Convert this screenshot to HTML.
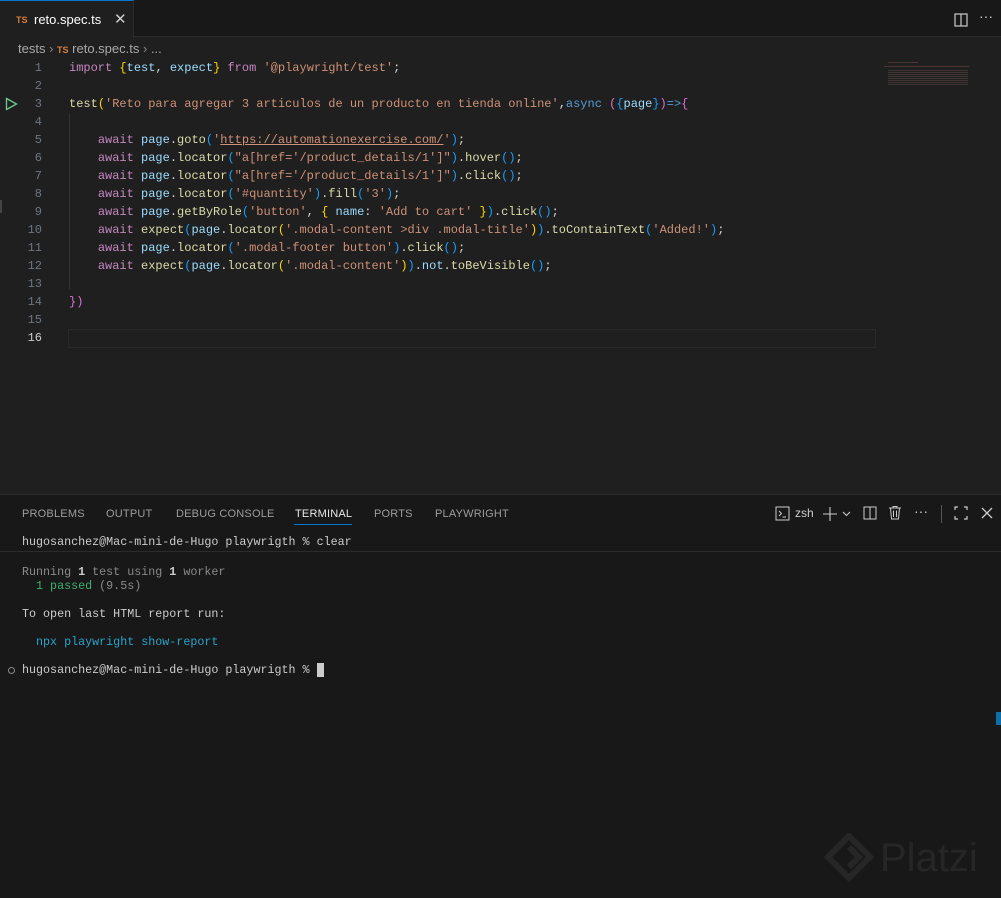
<!DOCTYPE html>
<html><head><meta charset="utf-8"><style>
*{margin:0;padding:0;box-sizing:border-box}
body{width:1001px;height:898px;background:#1f1f1f;position:relative;overflow:hidden;font-family:"Liberation Sans",sans-serif;color:#ccc}
.tabbar{position:absolute;left:0;top:0;width:1001px;height:37px;background:#181818;border-bottom:1px solid #2b2b2b}
.tab{position:absolute;left:0;top:0;width:134px;height:38px;background:#1f1f1f;border-top:1px solid #0078d4;border-right:1px solid #2b2b2b}
.ts{color:#d67e3c;font-size:9px;font-weight:bold}
.mono{font-family:"Liberation Mono",monospace}
.code{position:absolute;left:0;top:59px;font-size:12px;line-height:18px;white-space:pre}
.ln{position:absolute;left:0;width:42px;text-align:right;color:#6e7681}
.tx{position:absolute;left:69px}
.k{color:#c586c0}.f{color:#dcdcaa}.v{color:#9cdcfe}.s{color:#ce9178}.y{color:#ffd700}.p{color:#da70d6}.b{color:#179fff}.a{color:#569cd6}.w{color:#d4d4d4}
.panel{position:absolute;left:0;top:494px;width:1001px;height:404px;background:#181818;border-top:1px solid #2b2b2b}
.pt{position:absolute;top:13px;font-size:11px;color:#9d9d9d;letter-spacing:.2px}
.term{position:absolute;left:22px;font-size:11.7px;white-space:pre;color:#ccc}
</style></head><body>
<div class="tabbar">
 <div class="tab"><span class="ts" style="position:absolute;left:16px;top:14px">TS</span><span style="position:absolute;left:34px;top:11px;font-size:13px;color:#fff">reto.spec.ts</span><span style="position:absolute;left:114px;top:9px;font-size:15px;color:#ccc">✕</span></div>
 <svg style="position:absolute;left:954px;top:13px" width="14" height="14"><rect x="1" y="1" width="12" height="12" fill="none" stroke="#ccc" stroke-width="1.2"/><line x1="7" y1="1" x2="7" y2="13" stroke="#ccc" stroke-width="1.2"/></svg>
 <span style="position:absolute;left:979px;top:8px;font-size:14px;color:#ccc">···</span>
</div>
<div style="position:absolute;left:18px;top:41px;font-size:13px;color:#a9a9a9">tests <span style="color:#888">›</span> <span class="ts">TS</span> reto.spec.ts <span style="color:#888">›</span> ...</div>
<svg style="position:absolute;left:5px;top:97px" width="13" height="14"><path d="M1.5 1.5 L11.5 7 L1.5 12.5 Z" fill="none" stroke="#73c991" stroke-width="1.3"/></svg>
<div style="position:absolute;left:68px;top:329px;width:808px;height:19px;border:1px solid #282828"></div>
<div style="position:absolute;left:69px;top:113px;width:1px;height:176px;background:#333"></div>
<div style="position:absolute;left:0;top:200px;width:2px;height:13px;background:#444"></div>
<div class="code mono">
<div class="ln" style="top:0">1</div><div class="tx" style="top:0"><span class="k">import</span> <span class="y">{</span><span class="v">test</span><span class="w">, </span><span class="v">expect</span><span class="y">}</span> <span class="k">from</span> <span class="s">'@playwright/test'</span><span class="w">;</span></div>
<div class="ln" style="top:18px">2</div>
<div class="ln" style="top:36px">3</div><div class="tx" style="top:36px"><span class="f">test</span><span class="y">(</span><span class="s">'Reto para agregar 3 articulos de un producto en tienda online'</span><span class="w">,</span><span class="a">async</span> <span class="p">(</span><span class="b">{</span><span class="v">page</span><span class="b">}</span><span class="p">)</span><span class="a">=&gt;</span><span class="p">{</span></div>
<div class="ln" style="top:54px">4</div>
<div class="ln" style="top:72px">5</div><div class="tx" style="top:72px">    <span class="k">await</span> <span class="v">page</span><span class="w">.</span><span class="f">goto</span><span class="b">(</span><span class="s">'<u>https://automationexercise.com/</u>'</span><span class="b">)</span><span class="w">;</span></div>
<div class="ln" style="top:90px">6</div><div class="tx" style="top:90px">    <span class="k">await</span> <span class="v">page</span><span class="w">.</span><span class="f">locator</span><span class="b">(</span><span class="s">"a[href='/product_details/1']"</span><span class="b">)</span><span class="w">.</span><span class="f">hover</span><span class="b">()</span><span class="w">;</span></div>
<div class="ln" style="top:108px">7</div><div class="tx" style="top:108px">    <span class="k">await</span> <span class="v">page</span><span class="w">.</span><span class="f">locator</span><span class="b">(</span><span class="s">"a[href='/product_details/1']"</span><span class="b">)</span><span class="w">.</span><span class="f">click</span><span class="b">()</span><span class="w">;</span></div>
<div class="ln" style="top:126px">8</div><div class="tx" style="top:126px">    <span class="k">await</span> <span class="v">page</span><span class="w">.</span><span class="f">locator</span><span class="b">(</span><span class="s">'#quantity'</span><span class="b">)</span><span class="w">.</span><span class="f">fill</span><span class="b">(</span><span class="s">'3'</span><span class="b">)</span><span class="w">;</span></div>
<div class="ln" style="top:144px">9</div><div class="tx" style="top:144px">    <span class="k">await</span> <span class="v">page</span><span class="w">.</span><span class="f">getByRole</span><span class="b">(</span><span class="s">'button'</span><span class="w">, </span><span class="y">{</span> <span class="v">name</span><span class="w">: </span><span class="s">'Add to cart'</span> <span class="y">}</span><span class="b">)</span><span class="w">.</span><span class="f">click</span><span class="b">()</span><span class="w">;</span></div>
<div class="ln" style="top:162px">10</div><div class="tx" style="top:162px">    <span class="k">await</span> <span class="f">expect</span><span class="b">(</span><span class="v">page</span><span class="w">.</span><span class="f">locator</span><span class="y">(</span><span class="s">'.modal-content &gt;div .modal-title'</span><span class="y">)</span><span class="b">)</span><span class="w">.</span><span class="f">toContainText</span><span class="b">(</span><span class="s">'Added!'</span><span class="b">)</span><span class="w">;</span></div>
<div class="ln" style="top:180px">11</div><div class="tx" style="top:180px">    <span class="k">await</span> <span class="v">page</span><span class="w">.</span><span class="f">locator</span><span class="b">(</span><span class="s">'.modal-footer button'</span><span class="b">)</span><span class="w">.</span><span class="f">click</span><span class="b">()</span><span class="w">;</span></div>
<div class="ln" style="top:198px">12</div><div class="tx" style="top:198px">    <span class="k">await</span> <span class="f">expect</span><span class="b">(</span><span class="v">page</span><span class="w">.</span><span class="f">locator</span><span class="y">(</span><span class="s">'.modal-content'</span><span class="y">)</span><span class="b">)</span><span class="w">.</span><span class="v">not</span><span class="w">.</span><span class="f">toBeVisible</span><span class="b">()</span><span class="w">;</span></div>
<div class="ln" style="top:216px">13</div>
<div class="ln" style="top:234px">14</div><div class="tx" style="top:234px"><span class="p">})</span></div>
<div class="ln" style="top:252px">15</div>
<div class="ln" style="top:270px;color:#ccc">16</div>
</div>
<div style="position:absolute;left:884px;top:60px;width:90px;height:28px;opacity:.35"><div style="margin:2px 0 0 4px;width:30px;height:1px;background:#a06050"></div><div style="margin:3px 0 0 0;width:85px;height:1px;background:#a06050"></div><div style="margin:3px 0 0 4px;width:80px;height:16px;background:repeating-linear-gradient(#806060 0 1px,transparent 1px 2px)"></div></div>
<div class="panel">
 <span class="pt" style="left:22px">PROBLEMS</span>
 <span class="pt" style="left:106px">OUTPUT</span>
 <span class="pt" style="left:176px">DEBUG CONSOLE</span>
 <span class="pt" style="left:295px;color:#e7e7e7">TERMINAL</span>
 <div style="position:absolute;left:294px;top:29px;width:58px;height:1px;background:#0078d4"></div>
 <span class="pt" style="left:374px">PORTS</span>
 <span class="pt" style="left:435px">PLAYWRIGHT</span>
 <svg style="position:absolute;left:775px;top:11px" width="16" height="16"><rect x="1" y="1" width="13" height="13" fill="none" stroke="#ccc"/><path d="M4 5 L6.5 7.5 L4 10 M7.5 11 H11" fill="none" stroke="#ccc"/></svg>
 <span style="position:absolute;left:795px;top:11px;font-size:12px;color:#ccc">zsh</span>
 <svg style="position:absolute;left:822px;top:11px" width="32" height="16"><path d="M8 1 V15 M1 8 H15 M21 6 L24.5 9.5 L28 6" fill="none" stroke="#ccc" stroke-width="1.1"/></svg>
 <svg style="position:absolute;left:863px;top:11px" width="14" height="14"><rect x="1" y="1" width="12" height="12" fill="none" stroke="#ccc"/><line x1="7" y1="1" x2="7" y2="13" stroke="#ccc"/></svg>
 <svg style="position:absolute;left:888px;top:10px" width="14" height="16"><path d="M1 3 H13 M5 3 V1.5 H9 V3 M2.5 3 L3.5 14 H10.5 L11.5 3 M5.5 5.5 V12 M8.5 5.5 V12" fill="none" stroke="#ccc"/></svg>
 <span style="position:absolute;left:914px;top:8px;font-size:14px;color:#ccc">···</span>
 <div style="position:absolute;left:941px;top:10px;width:1px;height:18px;background:#555"></div>
 <svg style="position:absolute;left:954px;top:11px" width="14" height="14"><path d="M1 4 V1 H4 M10 1 H13 V4 M13 10 V13 H10 M4 13 H1 V10" fill="none" stroke="#ccc" stroke-width="1.2"/></svg>
 <svg style="position:absolute;left:981px;top:12px" width="12" height="12"><path d="M1 1 L11 11 M11 1 L1 11" stroke="#ccc" stroke-width="1.3"/></svg>
 <div style="position:absolute;left:0;top:56px;width:1001px;height:1px;background:#2b2b2b"></div>
</div>
<div class="term mono" style="top:535px">hugosanchez@Mac-mini-de-Hugo playwrigth % clear</div>
<div class="term mono" style="top:565px;color:#8a8a8a">Running <b style="color:#ccc">1</b> test using <b style="color:#ccc">1</b> worker</div>
<div class="term mono" style="top:579px">  <span style="color:#3fae6b">1 passed</span> <span style="color:#8a8a8a">(9.5s)</span></div>
<div class="term mono" style="top:607px">To open last HTML report run:</div>
<div class="term mono" style="top:635px;color:#29a3c9">  npx playwright show-report</div>
<div style="position:absolute;left:8px;top:667px;width:7px;height:7px;border:1px solid #888;border-radius:50%"></div>
<div class="term mono" style="top:663px">hugosanchez@Mac-mini-de-Hugo playwrigth % <span style="background:#ccc"> </span></div>
<div style="position:absolute;left:996px;top:712px;width:5px;height:13px;background:#0e6ea8"></div>
<svg style="position:absolute;left:824px;top:833px" width="50" height="50"><path d="M25 3 L46 24 L25 45 L4 24 Z M25 14 L35 24 L25 34" fill="none" stroke="#262626" stroke-width="6"/></svg>
<div style="position:absolute;left:880px;top:836px;font-size:40px;color:#262626">Platzi</div>
</body></html>
